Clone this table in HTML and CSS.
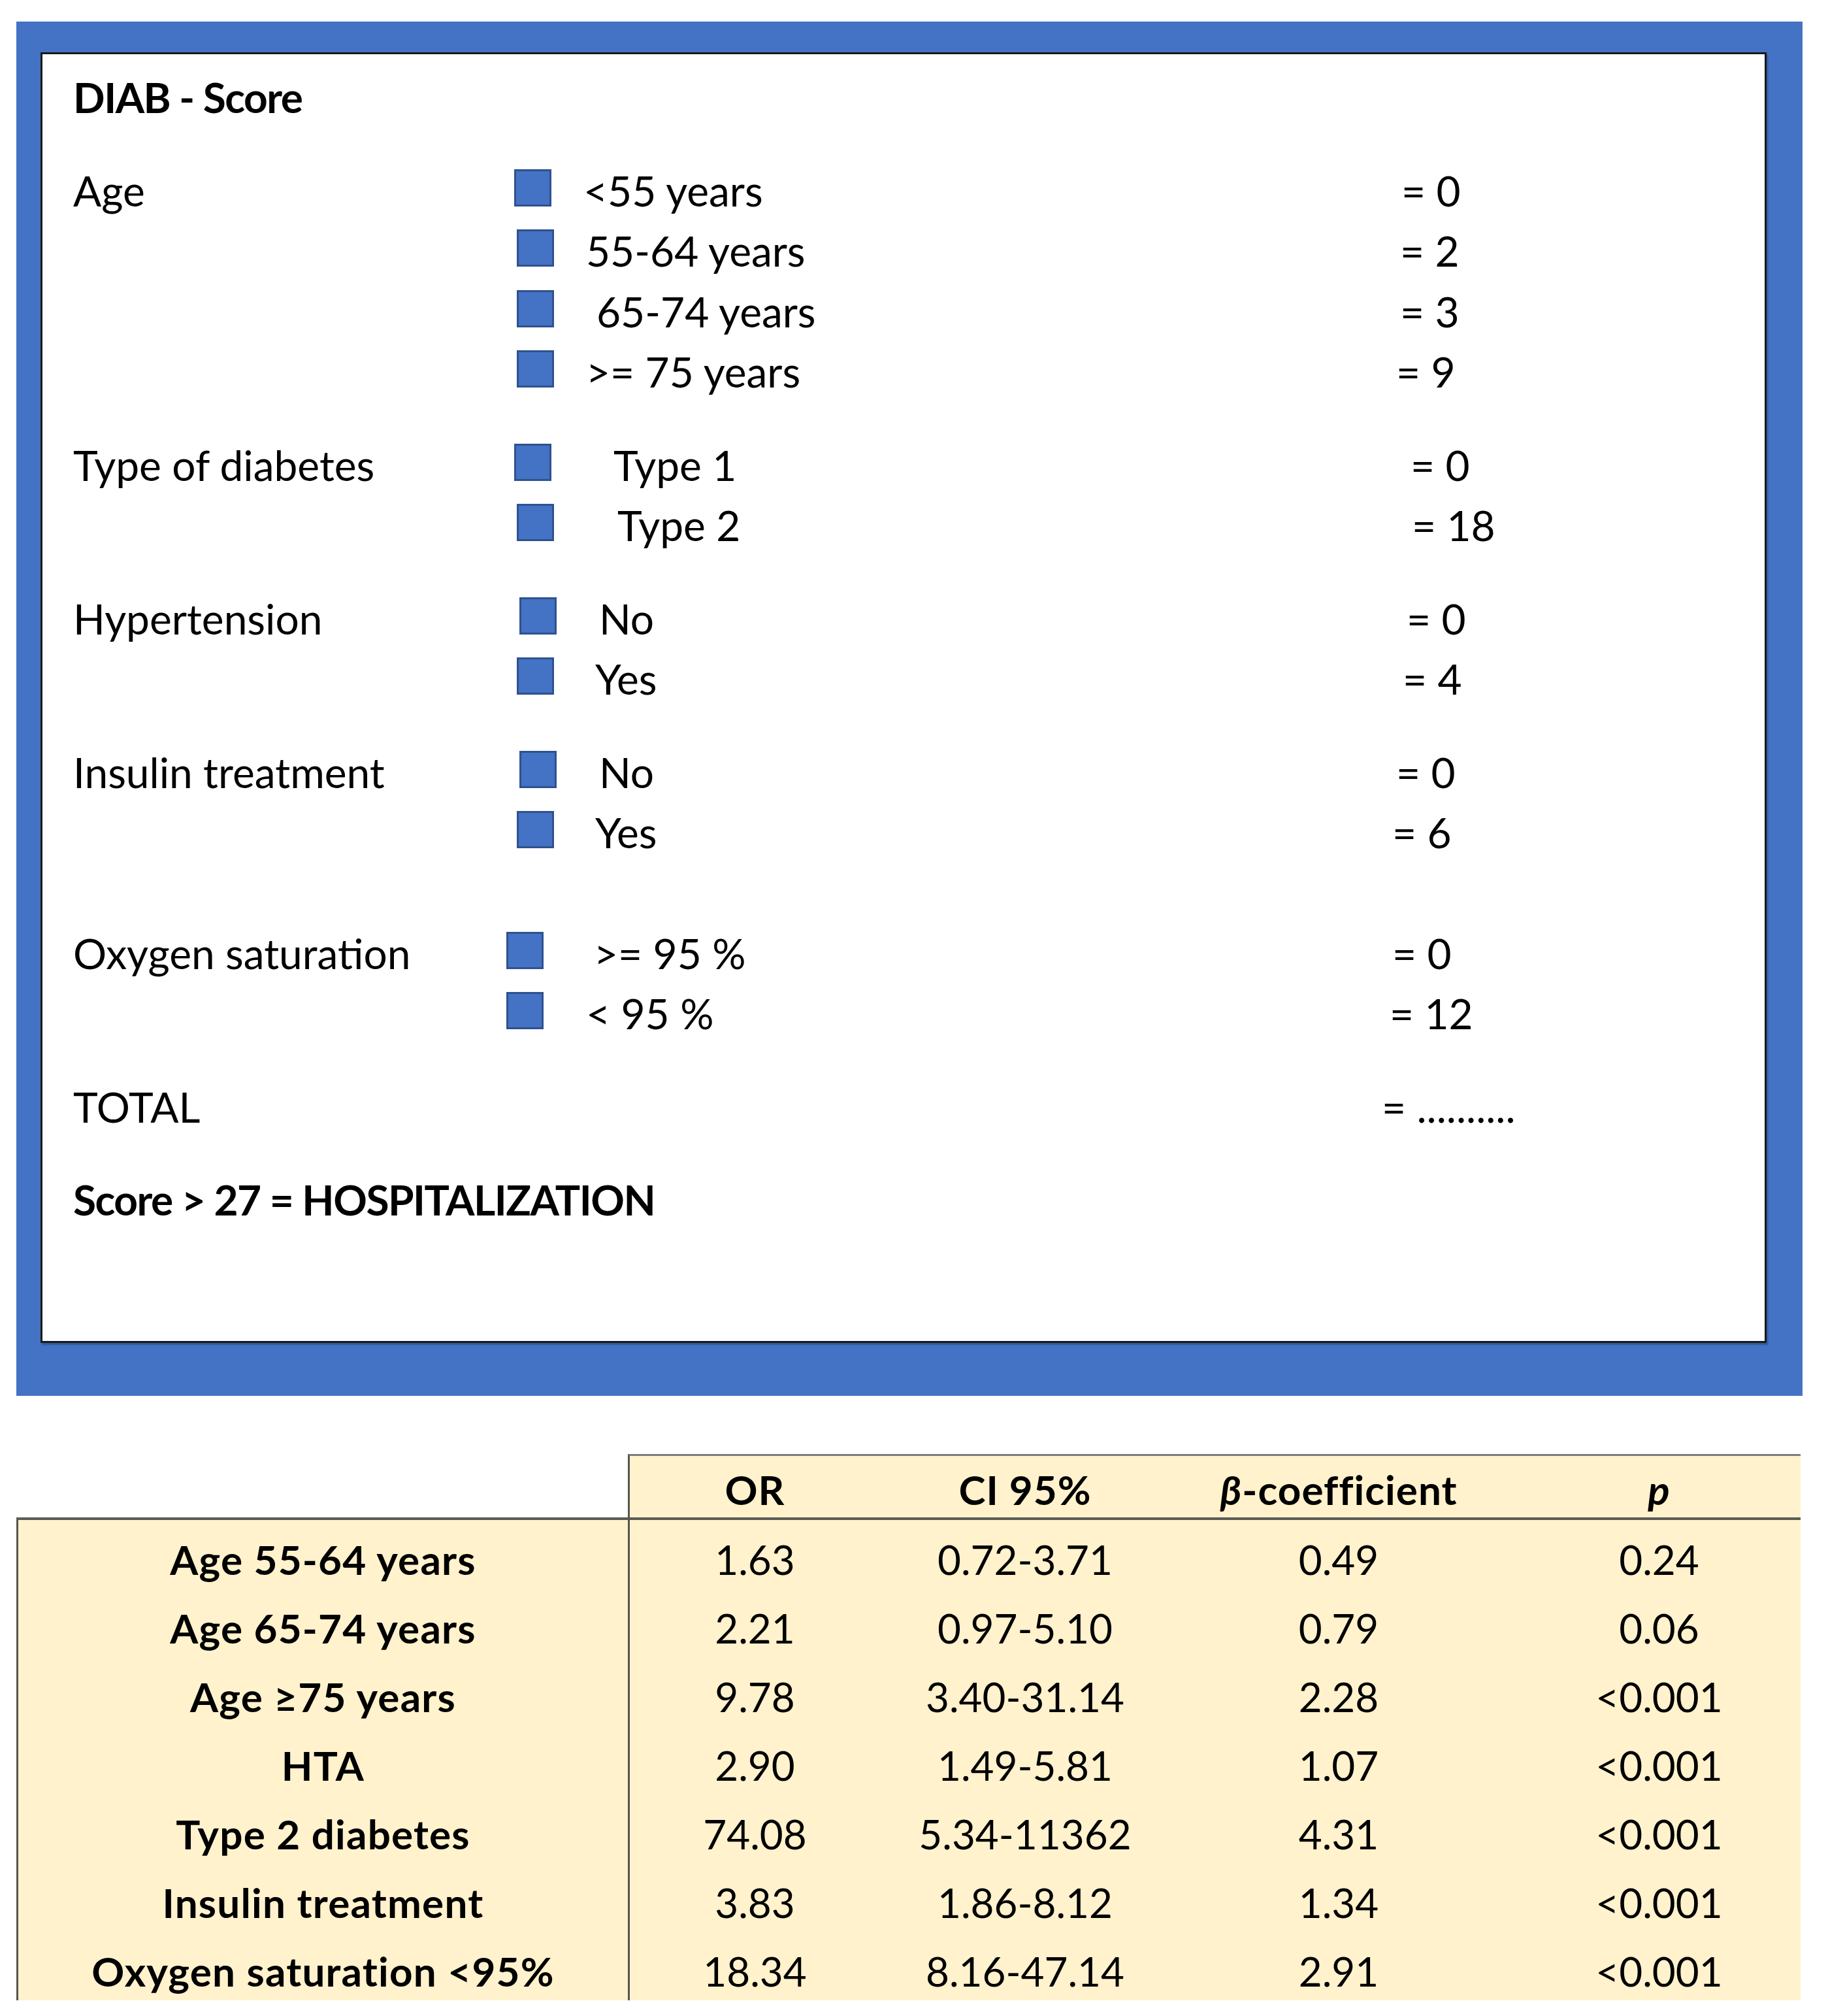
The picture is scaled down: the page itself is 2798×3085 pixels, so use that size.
FILE: index.html
```html
<!DOCTYPE html>
<html lang="en">
<head>
<meta charset="utf-8">
<title>DIAB - Score</title>
<link rel="stylesheet" href="styles.css">
</head>
<body>
<section class="frame">
  <div class="card">
    <h1 class="title">DIAB - Score</h1>

    <div class="group">
      <div class="label">Age</div>
      <ul class="opts">
        <li class="opt"><span class="box s-4"></span><span class="txt in-4">&lt;55 years</span><span class="val">= 0</span></li>
        <li class="opt"><span class="box"></span><span class="txt">55-64 years</span><span class="val v-2">= 2</span></li>
        <li class="opt"><span class="box"></span><span class="txt in16">65-74 years</span><span class="val v-2">= 3</span></li>
        <li class="opt"><span class="box"></span><span class="txt">&gt;= 75 years</span><span class="val v-8">= 9</span></li>
      </ul>
    </div>

    <div class="group">
      <div class="label">Type of diabetes</div>
      <ul class="opts">
        <li class="opt"><span class="box s-4"></span><span class="txt in42">Type 1</span><span class="val v14">= 0</span></li>
        <li class="opt"><span class="box"></span><span class="txt in48">Type 2</span><span class="val v16">= 18</span></li>
      </ul>
    </div>

    <div class="group">
      <div class="label">Hypertension</div>
      <ul class="opts">
        <li class="opt"><span class="box s4"></span><span class="txt in20">No</span><span class="val v8">= 0</span></li>
        <li class="opt"><span class="box"></span><span class="txt in14">Yes</span><span class="val v2">= 4</span></li>
      </ul>
    </div>

    <div class="group">
      <div class="label">Insulin treatment</div>
      <ul class="opts">
        <li class="opt"><span class="box s4"></span><span class="txt in20">No</span><span class="val v-8">= 0</span></li>
        <li class="opt"><span class="box"></span><span class="txt in14">Yes</span><span class="val v-14">= 6</span></li>
      </ul>
    </div>

    <div class="group group-far">
      <div class="label">Oxygen saturation</div>
      <ul class="opts">
        <li class="opt"><span class="box s-16"></span><span class="txt in12">&gt;= 95 %</span><span class="val v-14">= 0</span></li>
        <li class="opt"><span class="box s-16"></span><span class="txt">&lt; 95 %</span><span class="val v-18">= 12</span></li>
      </ul>
    </div>

    <div class="group">
      <div class="label">TOTAL</div>
      <div class="opt">
        <span class="nobox"></span><span class="txt"></span><span class="val v-30">= ..........</span>
      </div>
    </div>

    <p class="verdict">Score &gt; 27 = HOSPITALIZATION</p>
  </div>
</section>

<section class="stats">
  <div class="hcell blank"></div>
  <div class="hcell sep">OR</div>
  <div class="hcell">CI 95%</div>
  <div class="hcell"><i>β</i>-coefficient</div>
  <div class="hcell"><i>p</i></div>

  <div class="cell name">Age 55-64 years</div>
  <div class="cell sep">1.63</div>
  <div class="cell">0.72-3.71</div>
  <div class="cell">0.49</div>
  <div class="cell">0.24</div>

  <div class="cell name">Age 65-74 years</div>
  <div class="cell sep">2.21</div>
  <div class="cell">0.97-5.10</div>
  <div class="cell">0.79</div>
  <div class="cell">0.06</div>

  <div class="cell name">Age ≥75 years</div>
  <div class="cell sep">9.78</div>
  <div class="cell">3.40-31.14</div>
  <div class="cell">2.28</div>
  <div class="cell">&lt;0.001</div>

  <div class="cell name">HTA</div>
  <div class="cell sep">2.90</div>
  <div class="cell">1.49-5.81</div>
  <div class="cell">1.07</div>
  <div class="cell">&lt;0.001</div>

  <div class="cell name">Type 2 diabetes</div>
  <div class="cell sep">74.08</div>
  <div class="cell">5.34-11362</div>
  <div class="cell">4.31</div>
  <div class="cell">&lt;0.001</div>

  <div class="cell name">Insulin treatment</div>
  <div class="cell sep">3.83</div>
  <div class="cell">1.86-8.12</div>
  <div class="cell">1.34</div>
  <div class="cell">&lt;0.001</div>

  <div class="cell name">Oxygen saturation &lt;95%</div>
  <div class="cell sep">18.34</div>
  <div class="cell">8.16-47.14</div>
  <div class="cell">2.91</div>
  <div class="cell">&lt;0.001</div>
</section>
</body>
</html>
```

FILE: styles.css
```css
html, body {
  margin: 0;
  padding: 0;
  background: #ffffff;
}

body {
  font-family: Lato, "Open Sans", "DejaVu Sans", sans-serif;
  color: #000000;
}

/* ---------- DIAB score card ---------- */
.frame {
  margin: 33px 0 0 25px;
  width: 2734px;
  height: 2103px;
  box-sizing: border-box;
  background: #4472c4;
  padding: 47px 55px 81px 37px;
}

.card {
  height: 100%;
  box-sizing: border-box;
  background: #ffffff;
  border: 3px solid #1a1a1a;
  box-shadow: 2px 3px 2px rgba(0, 0, 0, 0.25);
  padding: 20px 0 0 47px;
}

.title {
  margin: 0;
  font-size: 64px;
  font-weight: 700;
  letter-spacing: -1.5px;
  line-height: 92.5px;
}

.group {
  display: flex;
  margin-top: 50px;
  font-size: 64px;
  line-height: 92.5px;
}

.group-far {
  margin-top: 92px;
}

.label {
  flex: none;
  width: 679px;
}

.opts {
  list-style: none;
  margin: 0;
  padding: 0;
}

.opt {
  display: grid;
  grid-template-columns: 57px 1297px auto;
  height: 92.5px;
  white-space: nowrap;
}

.box {
  display: block;
  width: 57px;
  height: 57px;
  box-sizing: border-box;
  margin-top: 13px;
  background: #4472c4;
  border: 3px solid #2f528f;
}

.box.s-4 { margin-left: -4px; }
.box.s4 { margin-left: 4px; }
.box.s-16 { margin-left: -16px; }

.txt {
  padding-left: 49px;
}

.txt.in-4 { padding-left: 45px; }
.txt.in12 { padding-left: 61px; }
.txt.in14 { padding-left: 63px; }
.txt.in16 { padding-left: 65px; }
.txt.in20 { padding-left: 69px; }
.txt.in42 { padding-left: 91px; }
.txt.in48 { padding-left: 97px; }

.val.v2 { margin-left: 2px; }
.val.v8 { margin-left: 8px; }
.val.v14 { margin-left: 14px; }
.val.v16 { margin-left: 16px; }
.val.v-2 { margin-left: -2px; }
.val.v-8 { margin-left: -8px; }
.val.v-14 { margin-left: -14px; }
.val.v-18 { margin-left: -18px; }
.val.v-30 { margin-left: -30px; }

.verdict {
  margin: 50px 0 0;
  font-size: 64px;
  font-weight: 700;
  letter-spacing: -1.5px;
  line-height: 92.5px;
}

/* ---------- statistics table ---------- */
.stats {
  display: grid;
  grid-template-columns: 936px 386px 444px 516px 449px;
  margin: 89px 0 0 25px;
  font-size: 62px;
}

.stats > :nth-child(5n) {
  padding-left: 16px;
}

.hcell {
  height: 101px;
  box-sizing: border-box;
  padding-top: 8px;
  line-height: 86px;
  background: #fff2cc;
  border-top: 3px solid #7d7d7d;
  border-bottom: 4px solid #5b5b55;
  text-align: center;
  font-weight: 700;
  letter-spacing: 1px;
  white-space: nowrap;
}

.hcell.blank {
  background: #ffffff;
  border-top-color: transparent;
}

.cell {
  height: 105px;
  box-sizing: border-box;
  padding-top: 16px;
  line-height: 89px;
  background: #fff2cc;
  text-align: center;
  white-space: nowrap;
}

.cell.name {
  font-weight: 700;
  letter-spacing: 1.2px;
  border-left: 3px solid #555550;
}

.sep {
  border-left: 3px solid #555550;
}
```
